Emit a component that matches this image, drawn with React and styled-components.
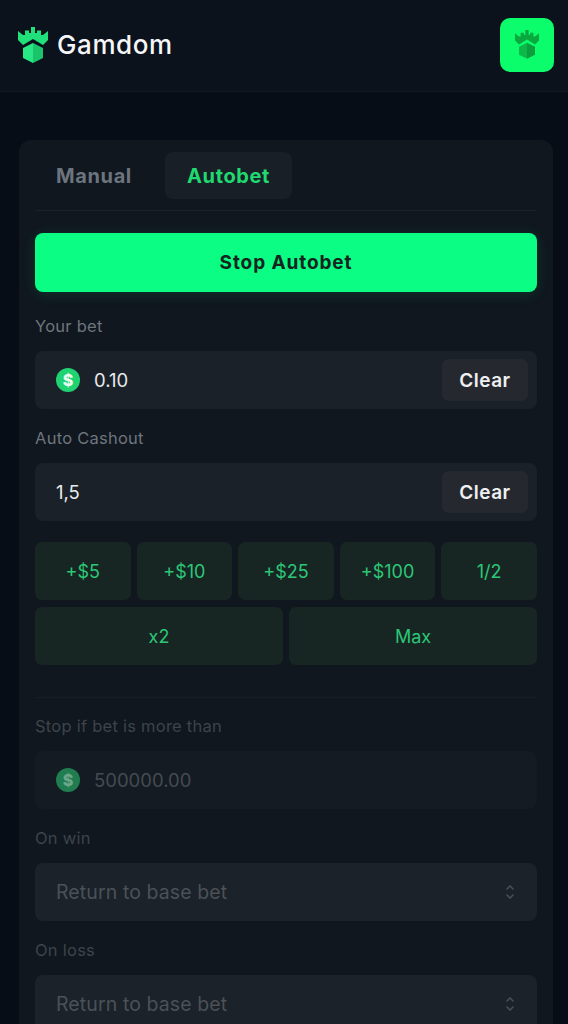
import React from 'react';
import styled, { createGlobalStyle } from 'styled-components';

const GlobalStyle = createGlobalStyle`
  html, body {
    margin: 0;
    height: 1024px;
    overflow: hidden;
    background: #070d17;
    font-family: "Inter", "Noto Sans", sans-serif;
  }
  * { box-sizing: border-box; }
`;

const Page = styled.div`
  width: 568px;
  height: 1024px;
  overflow: hidden;
`;

const Header = styled.header`
  height: 92px;
  display: flex;
  align-items: center;
  justify-content: space-between;
  padding: 0 14px 2px 18px;
  background: #0c121c;
  border-bottom: 1px solid #121922;
`;

const Brand = styled.div`
  display: flex;
  align-items: center;
  gap: 9px;
  font-size: 26px;
  font-weight: 500;
  letter-spacing: 0.6px;
  color: #f4f6f7;
`;

const AppBadge = styled.div`
  width: 54px;
  height: 54px;
  display: flex;
  align-items: center;
  justify-content: center;
  background: #0bfd6c;
  border-radius: 10px;
`;

const Card = styled.main`
  margin: 48px 15px 0 19px;
  padding: 12px 16px 0;
  background: #10171f;
  border-radius: 12px 12px 0 0;
`;

const Tabs = styled.div`
  display: flex;
  align-items: center;
  gap: 12px;
  padding-bottom: 11px;
  border-bottom: 1px solid #1a222b;
`;

const Tab = styled.div`
  width: ${(p) => (p.$active ? '127px' : '118px')};
  height: 47px;
  display: flex;
  align-items: center;
  justify-content: center;
  border-radius: 8px;
  font-size: 20px;
  font-weight: 700;
  letter-spacing: 0.6px;
  color: ${(p) => (p.$active ? '#20d970' : '#6c747d')};
  background: ${(p) => (p.$active ? '#181f27' : 'transparent')};
`;

const StopButton = styled.button`
  width: 100%;
  height: 59px;
  margin-top: 22px;
  border: none;
  border-radius: 8px;
  background: #0bfd83;
  box-shadow: 0 2px 14px rgba(11, 253, 131, 0.12);
  font-family: inherit;
  font-size: 19px;
  font-weight: 700;
  letter-spacing: 0.9px;
  color: #14241f;
`;

const Label = styled.div`
  height: 20px;
  margin-top: ${(p) => p.$top || 24}px;
  margin-bottom: 15px;
  line-height: 20px;
  font-size: 16.5px;
  letter-spacing: 0.25px;
  color: ${(p) => (p.$muted ? '#3d444b' : '#6d757d')};
`;

const Field = styled.div`
  height: 58px;
  display: flex;
  align-items: center;
  gap: 14px;
  padding: 0 9px 0 21px;
  background: ${(p) => (p.$muted ? '#141b23' : '#1b2128')};
  border-radius: 8px;
  font-size: 18.5px;
  color: ${(p) => (p.$muted ? '#454b51' : '#e8eaec')};
`;

const FieldText = styled.span`
  flex: 1;
`;

const Coin = styled.span`
  width: 24px;
  height: 24px;
  display: flex;
  align-items: center;
  justify-content: center;
  border-radius: 50%;
  background: ${(p) => (p.$muted ? '#1f7d50' : '#1fd272')};
  color: ${(p) => (p.$muted ? '#6fa58a' : '#e9fbf1')};
  font-size: 16px;
  font-weight: 800;
`;

const ClearButton = styled.button`
  width: 86px;
  height: 42px;
  border: none;
  border-radius: 7px;
  background: #25292f;
  font-family: inherit;
  font-size: 19px;
  font-weight: 600;
  letter-spacing: 0.5px;
  color: #eef0f1;
`;

const QuickGrid = styled.div`
  display: grid;
  grid-template-columns: repeat(${(p) => p.$cols}, 1fr);
  gap: 6px;
  margin-top: ${(p) => p.$top}px;
`;

const QuickButton = styled.button`
  height: 58px;
  border: none;
  border-radius: 7px;
  background: #172623;
  font-family: inherit;
  font-size: 18px;
  font-weight: 400;
  color: #2cc677;
`;

const Divider = styled.div`
  height: 1px;
  margin-top: 32px;
  background: #171e27;
`;

const SelectField = styled(Field)`
  padding-right: 22px;
  font-size: 19.5px;
  letter-spacing: 0.1px;
  color: #4b5157;
  background: #1b2229;
`;

const Logo = ({ size = 30, top = '#1fe07a', shade = '#1ac46b', side = '#27e884' }) => (
  <svg width={size} height={size * 1.2} viewBox="0 0 30 36" aria-hidden="true">
    <path
      d="M0 4 L5 8 H7 V3.5 H11 V6 H13 V0 H17 V6 H19 V3.5 H23 V8 H25 L30 4 V13 L25 18 L15 12 L5 18 L0 13 Z"
      fill={top}
    />
    <path d="M15 16 L25 21 V31 L15 36 Z" fill={shade} />
    <path d="M15 16 L5 21 V31 L15 36 Z" fill={side} />
  </svg>
);

const Chevrons = () => (
  <svg width="10" height="16" viewBox="0 0 10 16" fill="none" stroke="#464c52" strokeWidth="1.6" aria-hidden="true">
    <path d="M1.5 5.5 L5 2 L8.5 5.5" />
    <path d="M1.5 10.5 L5 14 L8.5 10.5" />
  </svg>
);

const amounts = ['+$5', '+$10', '+$25', '+$100', '1/2'];

export default function App() {
  return (
    <Page>
      <GlobalStyle />
      <Header>
        <Brand>
          <Logo />
          Gamdom
        </Brand>
        <AppBadge>
          <Logo size={24} top="#0aa83f" shade="#0a9e3c" side="#0cb848" />
        </AppBadge>
      </Header>
      <Card>
        <Tabs>
          <Tab>Manual</Tab>
          <Tab $active>Autobet</Tab>
        </Tabs>
        <StopButton>Stop Autobet</StopButton>
        <Label>Your bet</Label>
        <Field>
          <Coin>$</Coin>
          <FieldText>0.10</FieldText>
          <ClearButton>Clear</ClearButton>
        </Field>
        <Label $top={19}>Auto Cashout</Label>
        <Field>
          <FieldText>1,5</FieldText>
          <ClearButton>Clear</ClearButton>
        </Field>
        <QuickGrid $cols={5} $top={21}>
          {amounts.map((a) => (
            <QuickButton key={a}>{a}</QuickButton>
          ))}
        </QuickGrid>
        <QuickGrid $cols={2} $top={7}>
          <QuickButton>x2</QuickButton>
          <QuickButton>Max</QuickButton>
        </QuickGrid>
        <Divider />
        <Label $top={18} $muted>Stop if bet is more than</Label>
        <Field $muted>
          <Coin $muted>$</Coin>
          <FieldText>500000.00</FieldText>
        </Field>
        <Label $top={19} $muted>On win</Label>
        <SelectField>
          <FieldText>Return to base bet</FieldText>
          <Chevrons />
        </SelectField>
        <Label $top={19} $muted>On loss</Label>
        <SelectField>
          <FieldText>Return to base bet</FieldText>
          <Chevrons />
        </SelectField>
      </Card>
    </Page>
  );
}
